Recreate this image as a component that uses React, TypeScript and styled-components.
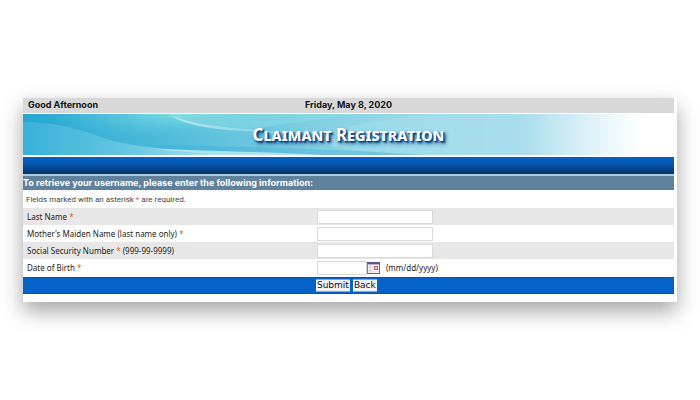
import React from "react";
import styled, { createGlobalStyle } from "styled-components";

const GlobalStyle = createGlobalStyle`
  *, *::before, *::after { box-sizing: border-box; }
  body {
    margin: 0;
    background: #fff;
    color: #222;
    font-family: "Noto Sans", "Open Sans", sans-serif;
    font-size: 8px;
    line-height: 14px;
  }
`;

const Page = styled.main`
  padding: 98px 23px;
`;

const Card = styled.section`
  padding: 0 3px 8px 0;
  background: #fff;
  box-shadow: 0 9px 20px rgba(0, 0, 0, 0.36);
`;

const GreetingBar = styled.header`
  display: grid;
  grid-template-columns: 1fr auto 1fr;
  height: 15px;
  padding: 0 5px;
  background: #d8d8d8;
  color: #111;
  font-family: Inter, sans-serif;
  font-size: 9px;
  font-weight: 700;
`;

const Banner = styled.div`
  display: grid;
  margin: 1px 0 2px;
  align-items: center;
  justify-items: center;
  overflow: hidden;

  > * {
    grid-area: 1 / 1;
  }
`;

const BannerArt = styled.svg`
  display: block;
  width: 100%;
  height: 41px;
`;

const Title = styled.h1`
  margin: 0;
  color: #fff;
  font-size: 17px;
  line-height: 24px;
  font-variant: small-caps;
  text-shadow: 1px 1px 1px #0b3f78, 2px 2px 2px #124f8c, 2px 3px 4px #2f6ea5;
`;

const NavStrip = styled.div`
  height: 17px;
  background: linear-gradient(#0860c4, #0458b4 35%, #023468);
`;

const Heading = styled.h2`
  height: 16px;
  margin: 0;
  border-top: 2px solid #b4c8e4;
  background: #5f819c;
  color: #fff;
  font-family: Inter, sans-serif;
  font-size: 9px;
  line-height: 14px;
`;

const Note = styled.p`
  height: 18px;
  margin: 0;
  padding: 3px 3px 1px;
  color: #444;
  font-family: Roboto, sans-serif;
`;

const Required = styled.span`
  color: #e2571e;
`;

const Row = styled.div<{ $shaded?: boolean }>`
  display: grid;
  grid-template-columns: 45% 1fr;
  align-items: center;
  height: 17px;
  background: ${(p) => (p.$shaded ? "#e7e7e7" : "#fff")};
`;

const Label = styled.label`
  padding-left: 4px;
`;

const Field = styled.div`
  display: flex;
  align-items: center;
  padding-left: 1px;
`;

const TextInput = styled.input<{ $short?: boolean }>`
  width: ${(p) => (p.$short ? "50px" : "116px")};
  height: 14px;
  padding: 0 2px;
  border: 1px solid #d9d9d9;
  background: #fff;
  font: inherit;
`;

const CalendarButton = styled.button`
  display: block;
  padding: 0;
  border: 0;
  background: none;

  svg {
    display: block;
  }
`;

const Hint = styled.span`
  padding-left: 6px;
`;

const Actions = styled.div`
  display: flex;
  gap: 3px;
  height: 17px;
  margin-top: 1px;
  padding: 1px 0 1px 45%;
  border: solid #0a50a8;
  border-width: 1px 0;
  background: #0462c8;
`;

const ActionButton = styled.button`
  height: 13px;
  padding: 0 1px;
  border: solid #8fa0d0;
  border-width: 1px 0;
  background: #f1f3f8;
  color: #111;
  font-family: "DejaVu Sans", sans-serif;
  font-size: 9px;
  line-height: 11px;
`;

function Waves() {
  return (
    <BannerArt viewBox="0 0 651 42" preserveAspectRatio="none" aria-hidden="true">
      <defs>
        <linearGradient id="sky">
          <stop offset="0" stopColor="#25a6d2" />
          <stop offset="0.2" stopColor="#4ab9d9" />
          <stop offset="0.45" stopColor="#82cfe2" />
          <stop offset="0.62" stopColor="#9fdaea" />
          <stop offset="0.76" stopColor="#a6dcec" />
          <stop offset="0.86" stopColor="#d9f0f6" />
          <stop offset="0.95" stopColor="#fff" />
        </linearGradient>
        <radialGradient id="glow" cx="0.6" cy="0" r="0.6">
          <stop offset="0" stopColor="#8ceae4" stopOpacity="0.7" />
          <stop offset="1" stopColor="#5cc6dc" stopOpacity="0" />
        </radialGradient>
        <linearGradient id="crest" x1="0" y1="0" x2="1" y2="0">
          <stop offset="0" stopColor="#fff" stopOpacity="0.5" />
          <stop offset="1" stopColor="#fff" stopOpacity="0.1" />
        </linearGradient>
        <linearGradient id="ridge" gradientUnits="userSpaceOnUse" x1="0" y1="0" x2="215" y2="0">
          <stop offset="0" stopColor="#5cc4e2" stopOpacity="0.35" />
          <stop offset="0.45" stopColor="#6fcbe4" stopOpacity="0.7" />
          <stop offset="1" stopColor="#bfeaf3" />
        </linearGradient>
        <linearGradient id="bay">
          <stop offset="0" stopColor="#a4dfeb" />
          <stop offset="1" stopColor="#b4e2ef" stopOpacity="0" />
        </linearGradient>
      </defs>
      <rect width="651" height="42" fill="url(#sky)" />
      <rect x="20" width="220" height="42" fill="url(#glow)" />
      <path d="M145 0H350C300 4 260 10 228 16C190 13 160 8 145 0Z" fill="#8fdde4" opacity="0.45" />
      <path d="M145 0C160 8 190 13 228 16S300 24 330 30C290 22 250 19 215 17S160 10 145 0Z" fill="url(#crest)" />
      <path d="M285 29C310 14 360 2 430 0H560V42H400C360 40 320 36 285 29Z" fill="url(#bay)" opacity="0.55" />
      <path d="M0 8C35 9 58 16 76 23S120 33 145 37S190 41 215 42H0Z" fill="url(#ridge)" />
      <path d="M120 32C180 32 280 34 400 42H270C200 41 155 38 120 32Z" fill="#31a9d2" opacity="0.32" />
      <path d="M130 35C180 38 230 38 300 42H215C180 41 155 39 130 35Z" fill="#c0ebf3" opacity="0.8" />
    </BannerArt>
  );
}

function CalendarIcon() {
  return (
    <svg width="13" height="12" viewBox="0 0 13 12" aria-hidden="true">
      <rect x="0.5" y="0.5" width="12" height="11" fill="#f3edf0" stroke="#8d7890" />
      <path d="M0 0H13V2H0Z" fill="#5a5688" />
      <path d="M1 2.5H12" stroke="#b9b6d2" />
      <path d="M1 5.5H6M1 8.5H6M3.5 3V11" stroke="#ddd4dc" />
      <rect x="7.5" y="4.5" width="3" height="3" fill="#ecc0bc" stroke="#b96672" />
      <path d="M0 11.5H13M12.5 3V12" stroke="#8a6067" />
    </svg>
  );
}

const fields = [
  { id: "last-name", label: "Last Name", shaded: true },
  { id: "maiden-name", label: "Mother's Maiden Name (last name only)", shaded: false },
  { id: "ssn", label: "Social Security Number", suffix: " (999-99-9999)", shaded: true },
];

export default function App() {
  return (
    <>
      <GlobalStyle />
      <Page>
        <Card>
          <GreetingBar>
            <span>Good Afternoon</span>
            <time dateTime="2020-05-08">Friday, May 8, 2020</time>
          </GreetingBar>
          <Banner>
            <Waves />
            <Title>Claimant Registration</Title>
          </Banner>
          <NavStrip />
          <form onSubmit={(e) => e.preventDefault()}>
            <Heading>To retrieve your username, please enter the following information:</Heading>
            <Note>
              Fields marked with an asterisk <Required>*</Required> are required.
            </Note>
            {fields.map((f) => (
              <Row key={f.id} $shaded={f.shaded}>
                <Label htmlFor={f.id}>
                  {f.label} <Required>*</Required>
                  {f.suffix}
                </Label>
                <Field>
                  <TextInput id={f.id} type="text" required />
                </Field>
              </Row>
            ))}
            <Row>
              <Label htmlFor="birth-date">
                Date of Birth <Required>*</Required>
              </Label>
              <Field>
                <TextInput id="birth-date" type="text" required $short />
                <CalendarButton type="button" aria-label="Choose date">
                  <CalendarIcon />
                </CalendarButton>
                <Hint>(mm/dd/yyyy)</Hint>
              </Field>
            </Row>
            <Actions>
              <ActionButton type="submit">Submit</ActionButton>
              <ActionButton type="button">Back</ActionButton>
            </Actions>
          </form>
        </Card>
      </Page>
    </>
  );
}
